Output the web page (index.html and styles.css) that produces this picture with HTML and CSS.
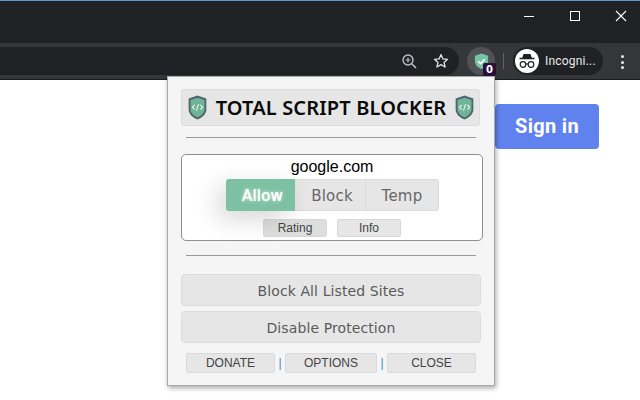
FILE: index.html
```html
<!DOCTYPE html>
<html lang="en">
<head>
<meta charset="utf-8">
<title>Total Script Blocker</title>
<link rel="stylesheet" href="styles.css">
</head>
<body>
<header class="chrome">
  <div class="titlebar">
    <button class="win"><svg width="12" height="12" viewBox="0 0 12 12"><path d="M1 6.500h10" stroke="#fff" stroke-width="1"/></svg></button>
    <button class="win"><svg width="12" height="12" viewBox="0 0 12 12"><rect x="1.500" y="1.500" width="9" height="9" fill="none" stroke="#fff"/></svg></button>
    <button class="win"><svg width="12" height="12" viewBox="0 0 12 12"><path d="M1 1l10 10M11 1L1 11" stroke="#fff" stroke-width="1.100"/></svg></button>
  </div>
  <div class="toolbar">
    <div class="omnibox">
      <svg class="omni-icon" width="16" height="16" viewBox="0 0 16 16"><circle cx="7" cy="7" r="5" fill="none" stroke="#bdc1c6" stroke-width="1.400"/><path d="M10.700 10.700L15 15" stroke="#bdc1c6" stroke-width="1.600"/><path d="M4.600 7h4.800M7 4.600v4.800" stroke="#bdc1c6" stroke-width="1.200"/></svg>
      <svg class="omni-icon" width="16" height="16" viewBox="0 0 16 16"><path d="M8 1.600l1.900 4.300 4.700.4-3.600 3.100 1.100 4.600L8 11.600 3.900 14l1.100-4.600-3.600-3.100 4.700-.4z" fill="none" stroke="#e0e2e5" stroke-width="1.300" stroke-linejoin="round"/></svg>
    </div>
    <div class="ext">
      <svg width="15" height="18" viewBox="0 0 16 18"><path d="M8 1l7 2.400v6C15 13.500 11.500 16 8 17.500 4.500 16 1 13.500 1 9.400v-6z" fill="#77c4a5"/><path d="M4.500 9.200l2.500 2.500 4.500-4.500" fill="none" stroke="#fff" stroke-width="1.700"/></svg>
      <span class="badge">0</span>
    </div>
    <span class="sep"></span>
    <div class="profile">
      <span class="avatar">
        <svg width="20" height="16" viewBox="0 0 20 16"><path d="M6.500 1h7l1.300 4H5.200z" fill="#202124"/><path d="M2.500 5.500h15" stroke="#202124" stroke-width="1.500"/><circle cx="6" cy="11.500" r="2.800" fill="none" stroke="#202124" stroke-width="1.200"/><circle cx="14" cy="11.500" r="2.800" fill="none" stroke="#202124" stroke-width="1.200"/><path d="M8.800 11h2.400" stroke="#202124" stroke-width="1.200"/></svg>
      </span>
      <span class="profile-name">Incogni...</span>
    </div>
    <div class="menu"><i></i><i></i><i></i></div>
  </div>
</header>

<main class="page">
  <a class="signin">Sign in</a>
</main>

<section class="popup">
  <div class="brand">
    <svg class="shield" width="19" height="25" viewBox="0 0 18 24"><path d="M9 .4l8.500 3v10.400c0 4.700-4.200 7.800-8.500 9.800-4.300-2-8.500-5.100-8.500-9.800V3.400z" fill="#4f6670"/><path d="M9 2.600l6.700 2.300v8.800c0 3.700-3.300 6.300-6.700 7.800-3.400-1.500-6.700-4.100-6.700-7.800V4.900z" fill="#6fb496"/><path d="M6.300 9.500l-2.200 2.300 2.200 2.200M11.700 9.500l2.200 2.300-2.200 2.200M10 8.800l-2 6.200" fill="none" stroke="#eef7f2" stroke-width="1"/></svg>
    <h1 class="brand-title">TOTAL SCRIPT BLOCKER</h1>
    <svg class="shield" width="19" height="25" viewBox="0 0 18 24"><path d="M9 .4l8.500 3v10.400c0 4.700-4.200 7.800-8.500 9.800-4.300-2-8.500-5.100-8.500-9.800V3.400z" fill="#4f6670"/><path d="M9 2.600l6.700 2.300v8.800c0 3.700-3.300 6.300-6.700 7.800-3.400-1.500-6.700-4.100-6.700-7.800V4.900z" fill="#6fb496"/><path d="M6.300 9.500l-2.200 2.300 2.200 2.200M11.700 9.500l2.200 2.300-2.200 2.200M10 8.800l-2 6.200" fill="none" stroke="#eef7f2" stroke-width="1"/></svg>
  </div>
  <hr class="rule rule-top">
  <div class="site">
    <div class="domain">google.com</div>
    <div class="segments">
      <button class="seg seg-on">Allow</button>
      <button class="seg seg-block">Block</button>
      <button class="seg seg-temp">Temp</button>
    </div>
    <div class="minis">
      <button class="mini mini-pressed">Rating</button>
      <button class="mini">Info</button>
    </div>
  </div>
  <hr class="rule rule-mid">
  <button class="wide">Block All Listed Sites</button>
  <button class="wide wide-2">Disable Protection</button>
  <div class="foot">
    <button class="foot-btn">DONATE</button>
    <span class="pipe">|</span>
    <button class="foot-btn foot-mid">OPTIONS</button>
    <span class="pipe">|</span>
    <button class="foot-btn">CLOSE</button>
  </div>
</section>
</body>
</html>
```
FILE: styles.css
```css
* { box-sizing: border-box; }
html, body { margin: 0; height: 100%; }
body { width: 640px; height: 400px; overflow: hidden; background: #fff; position: relative; font-family: "Liberation Sans", sans-serif; }
button { font: inherit; padding: 0; margin: 0; cursor: default; }

.chrome { height: 80px; display: flex; flex-direction: column; border-top: 1px solid #5a9bc9; background: #202124; }
.titlebar { height: 42px; display: flex; justify-content: flex-end; margin-right: -4px; }
.win { width: 46px; height: 30px; background: none; border: 0; display: flex; align-items: center; justify-content: center; }
.toolbar { height: 37px; background: #35363a; border-bottom: 1px solid #1b1c1e; display: flex; align-items: flex-start; padding-top: 4px; }
.omnibox { width: 459px; height: 28px; background: #202124; border-radius: 0 14px 14px 0; display: flex; justify-content: flex-end; align-items: center; gap: 16px; padding-right: 10px; }
.ext { width: 28px; height: 28px; margin-left: 8px; border-radius: 50%; background: #505256; position: relative; display: flex; align-items: center; justify-content: center; }
.badge { position: absolute; left: 16px; top: 16px; width: 13px; height: 13px; background: #2b0f3a; border-radius: 2px; color: #fff; font: bold 10px/13px "DejaVu Sans", sans-serif; text-align: center; }
.sep { width: 1px; height: 16px; margin: 6px 0 0 8px; background: #5f6368; }
.profile { margin-left: 9px; width: 90px; height: 28px; background: #202124; border-radius: 14px; display: flex; align-items: center; padding-left: 2px; gap: 6px; }
.avatar { width: 24px; height: 24px; border-radius: 50%; background: #fff; display: flex; align-items: center; justify-content: center; }
.profile-name { color: #e8eaed; font: 12px "Roboto", sans-serif; letter-spacing: .2px; }
.menu { margin: 8px 0 0 18px; display: flex; flex-direction: column; gap: 2.500px; }
.menu i { display: block; width: 3px; height: 3px; border-radius: 50%; background: #e8eaed; }

.page { height: 320px; display: flex; justify-content: flex-end; align-items: flex-start; padding: 24px 41px 0 0; }
.signin { width: 104px; height: 45px; background: #5f82ee; color: #fff; border-radius: 4px; font: bold 20px/45px "Roboto", sans-serif; letter-spacing: .3px; text-align: center; }

.popup { position: absolute; left: 167px; top: 76px; width: 328px; height: 310px; background: #f5f5f5; border: 1px solid #a9a9a9; box-shadow: 1px 2px 5px rgba(0,0,0,.35); padding: 12px 13px 0; display: flex; flex-direction: column; }
.brand { width: 299px; height: 37px; background: #e6e6e6; border: 1px solid #dcdcdc; border-radius: 3px; display: flex; align-items: center; justify-content: space-between; padding: 0 5px 0 6px; }
.brand-title { margin: 0; font: 600 20px/1 "Noto Sans", sans-serif; letter-spacing: .15px; color: #0a0a0a; white-space: nowrap; }
.rule { height: 1px; border: 0; background: #999; width: 290px; margin: 0 0 0 5px; }
.rule-top { margin-top: 11px; }
.site { width: 302px; height: 87px; margin-top: 16px; background: #fff; border: 1px solid #8f8f8f; border-radius: 5px; display: flex; flex-direction: column; align-items: center; }
.domain { font-size: 16px; line-height: 18px; margin-top: 3px; color: #000; }
.segments { display: flex; height: 32px; margin-top: 3px; margin-left: 1px; }
.seg { background: #e6e6e6; border: 1px solid #dadada; border-left: 0; padding-top: 2px; color: #666; font: 15px "DejaVu Sans", sans-serif; letter-spacing: .2px; }
.seg-on { width: 69px; padding-left: 4px; background: #7dc0a3; border: 0; border-radius: 3px 0 0 3px; color: #fff; text-shadow: 0 0 1px #fff, 0 0 4px rgba(255,255,255,.8); box-shadow: -8px 8px 24px rgba(0,0,0,.16); position: relative; }
.seg-block { width: 71px; padding-left: 4px; }
.seg-temp { width: 73px; border-radius: 0 3px 3px 0; }
.minis { display: flex; gap: 10px; margin-top: 8px; margin-left: -1px; }
.mini { width: 64px; height: 18px; padding-left: 1px; background: #e6e6e6; border: 1px solid #d8d8d8; border-radius: 2px; color: #444; font: 12px/16px "Liberation Sans", sans-serif; }
.mini-pressed { background: #dedede; }
.rule-mid { margin-top: 14px; }
.wide { width: 300px; height: 32px; padding-top: 2px; background: #e6e6e6; border: 1px solid #dcdcdc; border-radius: 4px; color: #5a5a5a; font: 14px "DejaVu Sans", sans-serif; letter-spacing: .1px; }
.rule-mid + .wide { margin-top: 18px; }
.wide-2 { margin-top: 5px; }
.foot { display: flex; align-items: center; margin-top: 10px; padding-left: 5px; height: 20px; }
.foot-btn { width: 89px; height: 20px; background: #e6e6e6; border: 1px solid #dadada; border-radius: 2px; color: #444; font: 12px/18px "Liberation Sans", sans-serif; }
.foot-mid { width: 92px; }
.pipe { width: 10px; text-align: center; color: #3a8cc0; font: 12px "Liberation Sans", sans-serif; }
```
